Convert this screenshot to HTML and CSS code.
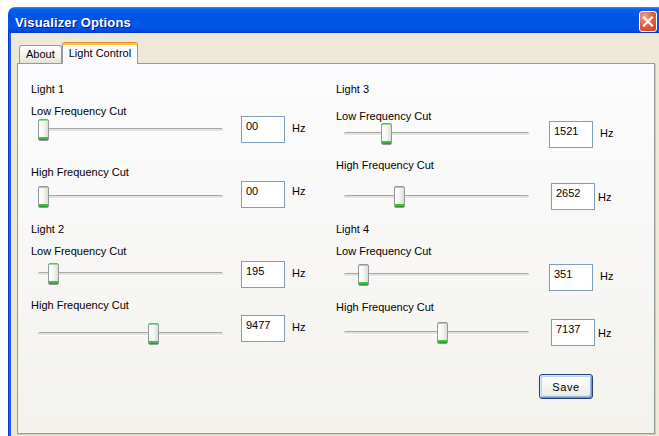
FILE: index.html
```html
<!DOCTYPE html>
<html lang="en">
<head>
<meta charset="utf-8">
<title>Visualizer Options</title>
<link rel="stylesheet" href="styles.css">
</head>
<body>
<div class="window">
  <div class="titlebar">
    <span class="titlebar-text">Visualizer Options</span>
    <button class="close-btn" type="button" aria-label="Close">
      <svg width="16" height="19" viewBox="0 0 16 19" aria-hidden="true">
        <path d="M4 5.5 L12 13.5 M12 5.5 L4 13.5" stroke="#fff" stroke-width="2.2" stroke-linecap="square" fill="none"/>
      </svg>
    </button>
  </div>

  <div class="client">
    <div class="tabs">
      <div class="tab">About</div>
      <div class="tab tab--active">Light Control</div>
    </div>

    <div class="tab-page">
      <div class="columns">
        <!-- Lights 1 and 2 -->
        <div class="col col--left">
          <div class="group-title">Light 1</div>
          <div class="field-label">Low Frequency Cut</div>
          <div class="field-row">
            <div class="slider" style="--pos:0"><div class="slider-track"></div><div class="slider-thumb"></div></div>
            <div class="textbox">00</div>
            <span class="unit">Hz</span>
          </div>
          <div class="field-label">High Frequency Cut</div>
          <div class="field-row">
            <div class="slider slider--lower" style="--pos:0"><div class="slider-track"></div><div class="slider-thumb"></div></div>
            <div class="textbox">00</div>
            <span class="unit unit--high">Hz</span>
          </div>

          <div class="group-title">Light 2</div>
          <div class="field-label">Low Frequency Cut</div>
          <div class="field-row">
            <div class="slider slider--raised" style="--pos:0.058"><div class="slider-track"></div><div class="slider-thumb"></div></div>
            <div class="textbox">195</div>
            <span class="unit">Hz</span>
          </div>
          <div class="field-label">High Frequency Cut</div>
          <div class="field-row">
            <div class="slider slider--lowest" style="--pos:0.63"><div class="slider-track"></div><div class="slider-thumb"></div></div>
            <div class="textbox">9477</div>
            <span class="unit">Hz</span>
          </div>
        </div>

        <!-- Lights 3 and 4 -->
        <div class="col col--right">
          <div class="group-title">Light 3</div>
          <div class="field-label">Low Frequency Cut</div>
          <div class="field-row">
            <div class="slider slider--raised" style="--pos:0.213"><div class="slider-track"></div><div class="slider-thumb"></div></div>
            <div class="textbox">1521</div>
            <span class="unit">Hz</span>
          </div>
          <div class="field-label">High Frequency Cut</div>
          <div class="field-row">
            <div class="slider" style="--pos:0.287"><div class="slider-track"></div><div class="slider-thumb"></div></div>
            <div class="textbox textbox--wide">2652</div>
            <span class="unit unit--tight">Hz</span>
          </div>

          <div class="group-title">Light 4</div>
          <div class="field-label">Low Frequency Cut</div>
          <div class="field-row">
            <div class="slider slider--top" style="--pos:0.08"><div class="slider-track"></div><div class="slider-thumb"></div></div>
            <div class="textbox">351</div>
            <span class="unit">Hz</span>
          </div>
          <div class="field-label">High Frequency Cut</div>
          <div class="field-row">
            <div class="slider" style="--pos:0.534"><div class="slider-track"></div><div class="slider-thumb"></div></div>
            <div class="textbox textbox--wide">7137</div>
            <span class="unit unit--tight">Hz</span>
          </div>
        </div>
      </div>

      <div class="actions">
        <button class="button button--default" type="button">Save</button>
      </div>
    </div>
  </div>
</div>
</body>
</html>
```

FILE: styles.css
```css
html,
body {
  margin: 0;
  height: 100%;
  overflow: hidden;
  background: #ffffff;
}

body {
  font-family: "Liberation Sans", Arial, sans-serif;
  font-size: 11px;
  color: #000000;
}

/* ---------- window frame ---------- */

.window {
  margin: 7px 0 0 8px;
  width: 656px;
}

.titlebar {
  display: flex;
  justify-content: space-between;
  align-items: flex-start;
  box-sizing: border-box;
  height: 26px;
  padding: 0 7px;
  border-radius: 7px 7px 0 0;
  background: linear-gradient(to bottom,
    #3d8cf6 0,
    #0a63ee 2px,
    #0058ee 6px,
    #0054e3 45%,
    #0057ea 75%,
    #004bdc 92%,
    #003cc4 100%);
}

.titlebar-text {
  padding-top: 8px;
  font-size: 13px;
  line-height: 15px;
  font-weight: bold;
  letter-spacing: 0.15px;
  color: #ffffff;
  text-shadow: 1px 1px 0 #0a1883;
}

.close-btn {
  display: flex;
  align-items: center;
  justify-content: center;
  box-sizing: border-box;
  width: 18px;
  height: 21px;
  margin-top: 4px;
  padding: 0;
  border: 1px solid #ffffff;
  border-radius: 3px;
  background: radial-gradient(circle at 30% 25%, #f3a58a 0, #e5603a 45%, #cf4220 100%);
}

.client {
  box-sizing: border-box;
  height: 420px;
  padding: 9px 0 0 9px;
  background: linear-gradient(to right, #0831d9 0 1px, #1a64ee 1px 3px, #ece9d8 3px);
}

/* ---------- tabs ---------- */

.tabs {
  display: flex;
  align-items: flex-end;
  height: 21px;
  margin-left: 2px;
}

.tab {
  box-sizing: border-box;
  height: 18px;
  padding: 0 6px;
  border: 1px solid #919b9c;
  border-bottom: 0;
  border-radius: 3px 3px 0 0;
  background: linear-gradient(to bottom, #ffffff, #f4f3ee 60%, #e3e1d8);
  line-height: 16px;
  white-space: nowrap;
}

.tab--active {
  position: relative;
  z-index: 1;
  height: 22px;
  margin-bottom: -1px;
  border-top-color: #e68b2c;
  background: #fcfcfe;
  box-shadow: inset 0 2px 0 #ffc73c;
  line-height: 20px;
}

.tab-page {
  box-sizing: border-box;
  display: flex;
  flex-direction: column;
  width: 638px;
  height: 371px;
  padding: 19px 0 0 13px;
  border: 1px solid #919b9c;
  background: linear-gradient(to bottom, #fcfcfe, #f3f2ed);
  box-shadow: 1px 1px 0 #cfcdc0;
}

/* ---------- control columns ---------- */

.columns {
  display: grid;
  grid-template-columns: 305px 1fr;
  align-items: start;
}

.col {
  display: grid;
}

.col--left {
  grid-template-rows: 22px 11px 50px 15px 42px 22px 16px 38px 16px 27px;
}

.col--right {
  grid-template-rows: 27px 11px 38px 24px 40px 22px 19px 37px 18px 28px;
}

.group-title,
.field-label {
  line-height: 13px;
  white-space: nowrap;
}

.field-row {
  display: flex;
  align-items: flex-start;
}

/* ---------- trackbar ---------- */

.slider {
  position: relative;
  flex: none;
  width: 185px;
  height: 22px;
  margin: 3px 0 0 7px;
}

.col--right .slider {
  margin-left: 8px;
}

.slider--raised { margin-top: 2px; }
.slider--top    { margin-top: 0; }
.slider--lower  { margin-top: 5px; }
.slider--lowest { margin-top: 8px; }

.slider-track {
  position: absolute;
  left: 0;
  right: 0;
  top: 9px;
  box-sizing: border-box;
  height: 4px;
  border-top: 1px solid #a7a6a0;
  border-bottom: 1px solid #ffffff;
  border-radius: 2px;
  background: #e4e3dd;
}

.slider-thumb {
  position: absolute;
  top: 0;
  left: calc(var(--pos) * (100% - 11px));
  box-sizing: border-box;
  width: 11px;
  height: 22px;
  border: 1px solid #8e999b;
  border-radius: 2px;
  background:
    linear-gradient(to bottom,
      #93de93 0 1px,
      transparent 1px calc(100% - 3px),
      #44b944 calc(100% - 3px) calc(100% - 1px),
      #21a121 calc(100% - 1px)),
    linear-gradient(to right, #ffffff, #f4f4f0 55%, #dcdcd4);
}

/* ---------- text boxes ---------- */

.textbox {
  flex: none;
  box-sizing: border-box;
  width: 44px;
  height: 27px;
  margin-left: 18px;
  padding: 3px 4px 0;
  border: 1px solid #7f9db9;
  background: #ffffff;
  line-height: 13px;
}

.col--right .textbox {
  margin-left: 20px;
}

.col--right .textbox--wide {
  margin-left: 22px;
}

.unit {
  margin: 6px 0 0 7px;
  line-height: 13px;
}

.unit--high {
  margin-top: 4px;
}

.unit--tight {
  margin-left: 3px;
  margin-top: 8px;
}

/* ---------- buttons ---------- */

.actions {
  display: flex;
  justify-content: flex-end;
  margin-top: 27px;
  padding-right: 61px;
}

.button {
  box-sizing: border-box;
  width: 54px;
  height: 25px;
  padding: 0;
  border: 1px solid #23406e;
  border-radius: 3px;
  background: linear-gradient(to bottom, #ffffff, #f5f4f0 50%, #ecebe6 85%, #d8d3c8);
  font-family: "Liberation Sans", Arial, sans-serif;
  font-size: 11px;
  letter-spacing: 0.6px;
  color: #000000;
}

.button--default {
  box-shadow:
    inset 1px 1px 0 #cee7ff,
    inset -1px -1px 0 #6f95d0,
    inset 2px 2px 0 #bcd4f6,
    inset -2px -2px 0 #9ab8e4;
}
```
